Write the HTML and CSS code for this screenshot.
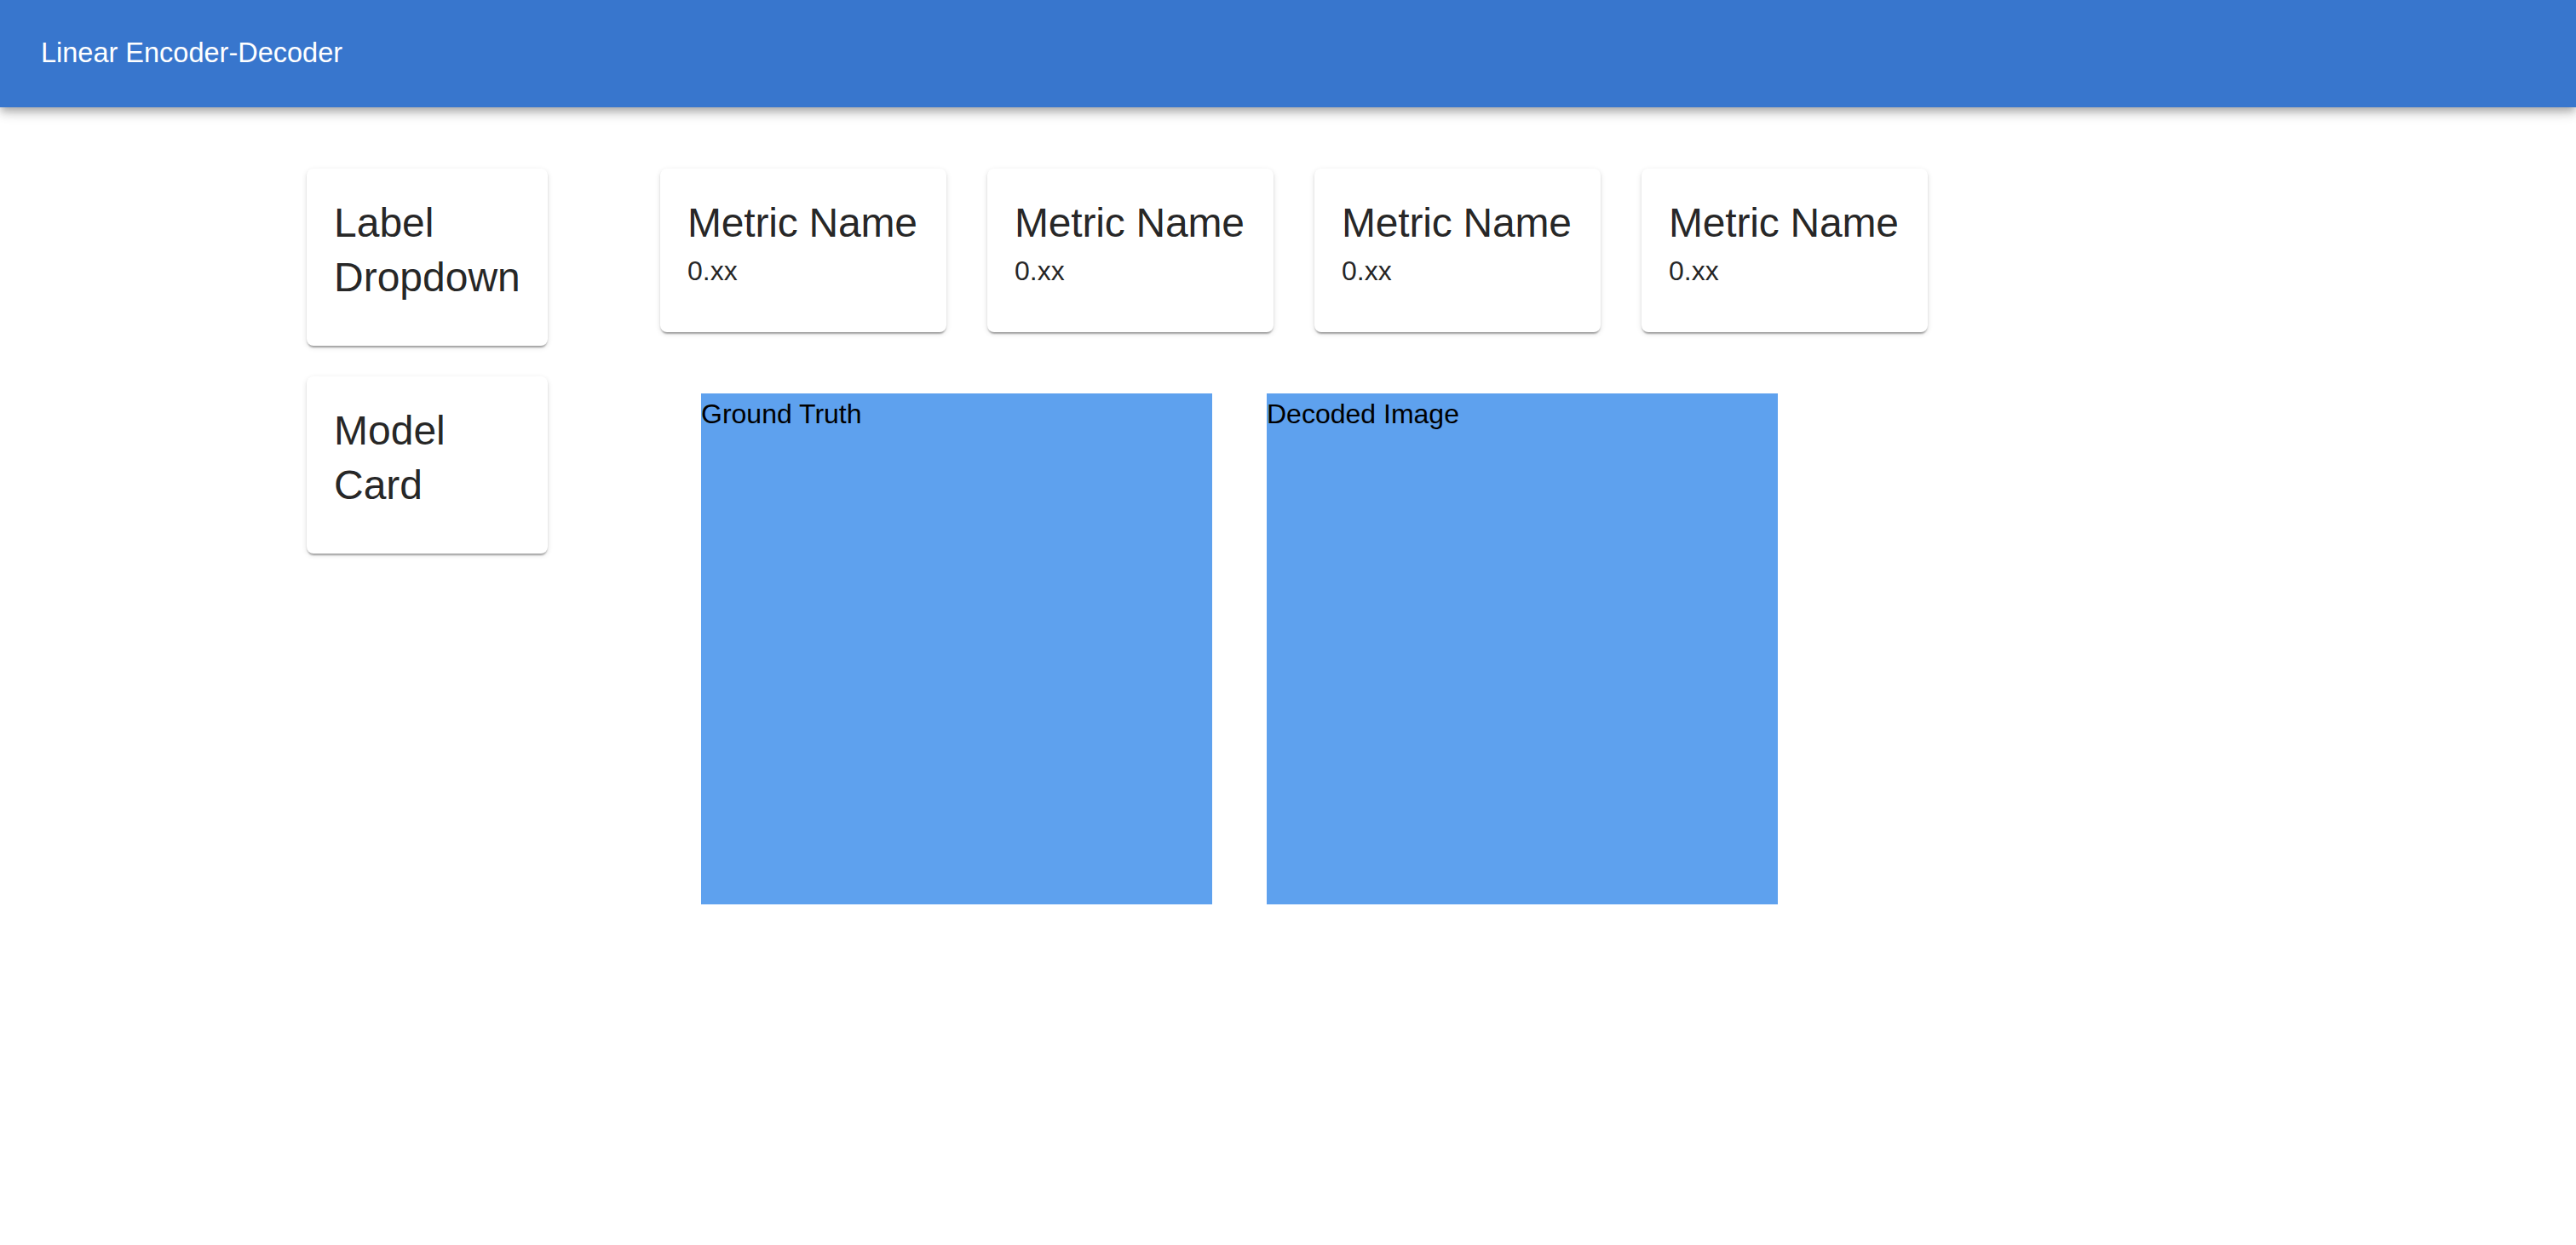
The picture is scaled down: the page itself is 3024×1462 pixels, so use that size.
FILE: index.html
```html
<!DOCTYPE html>
<html lang="en">
<head>
<meta charset="utf-8">
<title>Linear Encoder-Decoder</title>
<link rel="stylesheet" href="styles.css">
</head>
<body>
<header class="app-bar">
  <div class="app-title">Linear Encoder-Decoder</div>
</header>
<main class="layout">
  <aside class="side">
    <div class="card side-card">
      <div class="card-title">Label Dropdown</div>
    </div>
    <div class="card side-card">
      <div class="card-title">Model Card</div>
    </div>
  </aside>
  <section class="content">
    <div class="metrics">
      <div class="card metric-card">
        <div class="card-title metric-title">Metric Name</div>
        <div class="metric-value">0.xx</div>
      </div>
      <div class="card metric-card">
        <div class="card-title metric-title">Metric Name</div>
        <div class="metric-value">0.xx</div>
      </div>
      <div class="card metric-card">
        <div class="card-title metric-title">Metric Name</div>
        <div class="metric-value">0.xx</div>
      </div>
      <div class="card metric-card">
        <div class="card-title metric-title">Metric Name</div>
        <div class="metric-value">0.xx</div>
      </div>
    </div>
    <div class="images">
      <div class="image-box">Ground Truth</div>
      <div class="image-box">Decoded Image</div>
    </div>
  </section>
</main>
</body>
</html>
```

FILE: styles.css
```css
html, body {
  margin: 0;
  padding: 0;
  background: #ffffff;
}

body {
  font-family: "Liberation Sans", Arial, Helvetica, sans-serif;
  color: rgba(0, 0, 0, 0.87);
}

.app-bar {
  height: 126px;
  background: #3876cd;
  display: flex;
  align-items: center;
  padding: 0 48px;
  box-sizing: border-box;
  box-shadow: 0 4px 8px -2px rgba(0, 0, 0, 0.2), 0 8px 10px 0 rgba(0, 0, 0, 0.14), 0 2px 20px 0 rgba(0, 0, 0, 0.12);
  position: relative;
  z-index: 1;
}

.app-title {
  color: #ffffff;
  font-size: 32.5px;
  line-height: 48px;
  margin-top: -2px;
}

.layout {
  display: flex;
  align-items: flex-start;
  padding: 72px 0 0 360px;
  gap: 132px;
}

.side {
  display: flex;
  flex-direction: column;
  gap: 36px;
  width: 283px;
  flex: none;
}

.card {
  background: #ffffff;
  border-radius: 8px;
  padding: 32px 32px 48px;
  box-shadow: 0 4px 2px -2px rgba(0, 0, 0, 0.2), 0 2px 2px 0 rgba(0, 0, 0, 0.14), 0 2px 6px 0 rgba(0, 0, 0, 0.12);
}

.side-card {
  min-height: 208px;
  box-sizing: border-box;
}

.card-title {
  font-size: 48px;
  line-height: 64px;
  color: rgba(0, 0, 0, 0.87);
}

.metric-title {
  white-space: nowrap;
  letter-spacing: -0.2px;
}

.metric-value {
  font-size: 32px;
  line-height: 48px;
  color: rgba(0, 0, 0, 0.87);
}

.content {
  display: flex;
  flex-direction: column;
  gap: 72px;
}

.metrics {
  display: flex;
  gap: 48px;
}

.metric-card {
  width: 336px;
  height: 192px;
  box-sizing: border-box;
}

.images {
  display: flex;
  gap: 64px;
  padding-left: 48px;
}

.image-box {
  width: 600px;
  height: 600px;
  background: #5ea1ee;
  color: #000000;
  font-size: 32px;
  line-height: 48px;
}
```
